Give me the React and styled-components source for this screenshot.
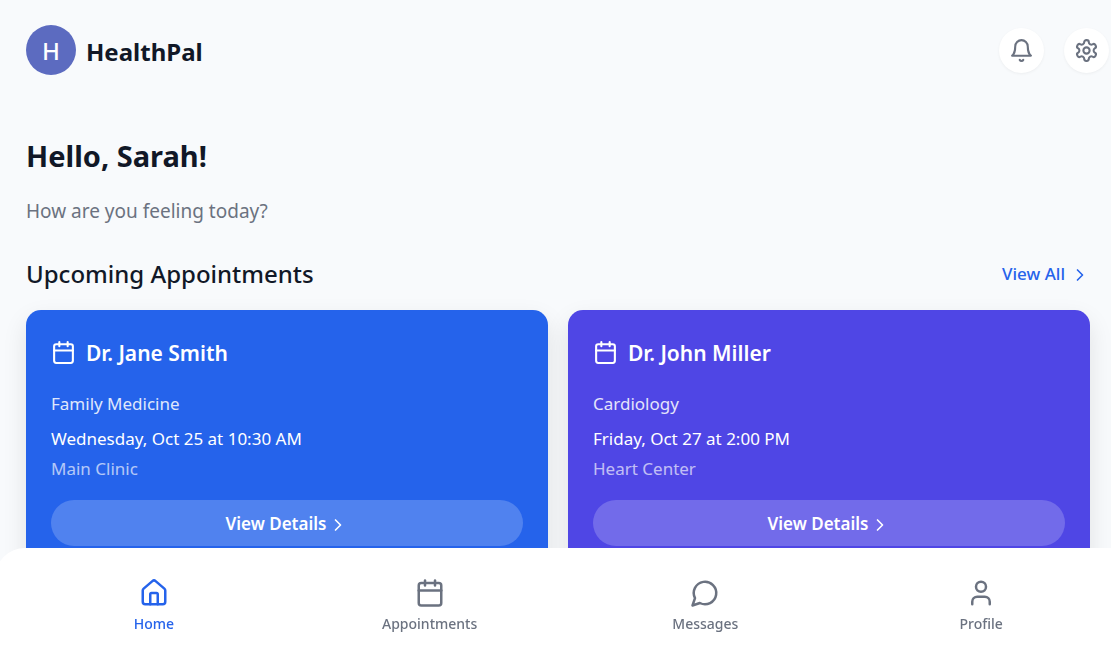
import React, { useState } from 'react';
import styled, { createGlobalStyle } from 'styled-components';
import { Calendar, ChevronRight, House, User } from 'lucide-react';
import { LuBell, LuMessageCircle, LuSettings } from 'react-icons/lu';

const GlobalStyle = createGlobalStyle`
  * {
    box-sizing: border-box;
  }
  body {
    margin: 0;
    background: #f8fafc;
    color: #111827;
    font-family: 'Segoe UI', 'Noto Sans', 'Open Sans', sans-serif;
    scrollbar-width: none;
    overflow-x: hidden;
  }
  button {
    font-family: inherit;
    cursor: pointer;
  }
`;

const Page = styled.div`
  padding: 25px 21px 120px 26px;
`;

const Header = styled.header`
  display: flex;
  align-items: center;
  justify-content: space-between;
  margin-right: -19px;
`;

const Brand = styled.div`
  display: flex;
  align-items: center;
  gap: 10px;
`;

const Avatar = styled.div`
  display: flex;
  align-items: center;
  justify-content: center;
  width: 50px;
  height: 50px;
  border-radius: 50%;
  background: #5c6bc0;
  color: #fff;
  font-size: 24px;
  font-weight: 500;
`;

const BrandName = styled.span`
  font-size: 24px;
  font-weight: 700;
  line-height: 30px;
  padding-top: 4px;
`;

const HeaderActions = styled.div`
  display: flex;
  gap: 20px;
`;

const IconButton = styled.button`
  display: flex;
  align-items: center;
  justify-content: center;
  width: 45px;
  height: 45px;
  padding: 0;
  border: none;
  border-radius: 50%;
  background: #fff;
  color: #6b7280;
  box-shadow: 0 1px 3px rgba(0, 0, 0, 0.05);
`;

const Greeting = styled.section`
  margin-top: 60px;
`;

const GreetingTitle = styled.h1`
  margin: 0;
  font-size: 29px;
  font-weight: 700;
  line-height: 42px;
`;

const GreetingText = styled.p`
  margin: 20px 0 0;
  color: #6b7280;
  font-size: 19px;
  line-height: 28px;
`;

const SectionHeader = styled.div`
  display: flex;
  align-items: center;
  justify-content: space-between;
  margin-top: 32px;
`;

const SectionTitle = styled.h2`
  margin: 0;
  font-size: 24px;
  font-weight: 500;
  line-height: 34px;
`;

const ViewAllLink = styled.a`
  display: flex;
  align-items: center;
  gap: 5px;
  color: #2563eb;
  font-size: 17px;
  font-weight: 500;
  line-height: 24px;
  text-decoration: none;
`;

const Chevron = styled(ChevronRight)`
  flex-shrink: 0;
  margin-top: 2px;
`;

const CardGrid = styled.div`
  display: grid;
  grid-template-columns: 1fr 1fr;
  gap: 20px;
  margin-top: 19px;
`;

const Card = styled.article`
  padding: 25px;
  border-radius: 15px;
  background: ${(props) => props.$color};
  color: #fff;
  box-shadow: 0 10px 25px rgba(0, 0, 0, 0.1);
`;

const CardHeader = styled.div`
  display: flex;
  align-items: center;
  gap: 10px;
  height: 35px;
`;

const DoctorName = styled.h3`
  margin: 0;
  font-size: 21px;
  font-weight: 600;
`;

const CardText = styled.p`
  margin: ${(props) => props.$top}px 0 0;
  font-size: 17px;
  line-height: 25px;
  opacity: ${(props) => props.$opacity};
`;

const DetailsButton = styled.button`
  display: flex;
  align-items: center;
  justify-content: center;
  gap: 2px;
  width: 100%;
  height: 46px;
  margin-top: 19px;
  border: none;
  border-radius: 23px;
  background: rgba(255, 255, 255, 0.2);
  color: #fff;
  font-size: 17px;
  font-weight: 600;

  ${Chevron} {
    margin-top: 4px;
  }
`;

// the bar is a little wider than the window on both sides
const BottomNav = styled.nav`
  position: fixed;
  bottom: 0;
  left: -5px;
  right: -29px;
  display: flex;
  height: 106px;
  padding: 0 21px;
  border-radius: 30px 30px 0 0;
  background: #fff;
`;

const NavItem = styled.button`
  flex: 1;
  display: flex;
  flex-direction: column;
  align-items: center;
  gap: 5px;
  padding: 30px 0 0;
  border: none;
  background: none;
  color: ${(props) => (props.$active ? '#2563eb' : '#6b7280')};
  font-size: 14px;
  font-weight: 500;
  line-height: 22px;
`;

const appointments = [
  {
    doctor: 'Dr. Jane Smith',
    specialty: 'Family Medicine',
    date: 'Wednesday, Oct 25 at 10:30 AM',
    place: 'Main Clinic',
    color: '#2563eb',
  },
  {
    doctor: 'Dr. John Miller',
    specialty: 'Cardiology',
    date: 'Friday, Oct 27 at 2:00 PM',
    place: 'Heart Center',
    color: '#4f46e5',
  },
];

const navItems = [
  { label: 'Home', Icon: House },
  { label: 'Appointments', Icon: Calendar },
  { label: 'Messages', Icon: LuMessageCircle },
  { label: 'Profile', Icon: User },
];

const AppointmentCard = ({ doctor, specialty, date, place, color }) => (
  <Card $color={color}>
    <CardHeader>
      <Calendar size={25} />
      <DoctorName>{doctor}</DoctorName>
    </CardHeader>
    <CardText $top={21} $opacity={0.85}>{specialty}</CardText>
    <CardText $top={10} $opacity={1}>{date}</CardText>
    <CardText $top={5} $opacity={0.65}>{place}</CardText>
    <DetailsButton type="button">
      View Details
      <Chevron size={20} />
    </DetailsButton>
  </Card>
);

const App = () => {
  const [active, setActive] = useState('Home');

  return (
    <>
      <GlobalStyle />
      <Page>
        <Header>
          <Brand>
            <Avatar>H</Avatar>
            <BrandName>HealthPal</BrandName>
          </Brand>
          <HeaderActions>
            <IconButton type="button" aria-label="Notifications">
              <LuBell size={25} />
            </IconButton>
            <IconButton type="button" aria-label="Settings">
              <LuSettings size={25} />
            </IconButton>
          </HeaderActions>
        </Header>
        <Greeting>
          <GreetingTitle>Hello, Sarah!</GreetingTitle>
          <GreetingText>How are you feeling today?</GreetingText>
        </Greeting>
        <SectionHeader>
          <SectionTitle>Upcoming Appointments</SectionTitle>
          <ViewAllLink href="#appointments">
            View All
            <Chevron size={20} />
          </ViewAllLink>
        </SectionHeader>
        <CardGrid>
          {appointments.map((item) => (
            <AppointmentCard key={item.doctor} {...item} />
          ))}
        </CardGrid>
      </Page>
      <BottomNav>
        {navItems.map(({ label, Icon }) => (
          <NavItem
            key={label}
            type="button"
            $active={active === label}
            onClick={() => setActive(label)}
          >
            <Icon size={30} />
            {label}
          </NavItem>
        ))}
      </BottomNav>
    </>
  );
};

export default App;
